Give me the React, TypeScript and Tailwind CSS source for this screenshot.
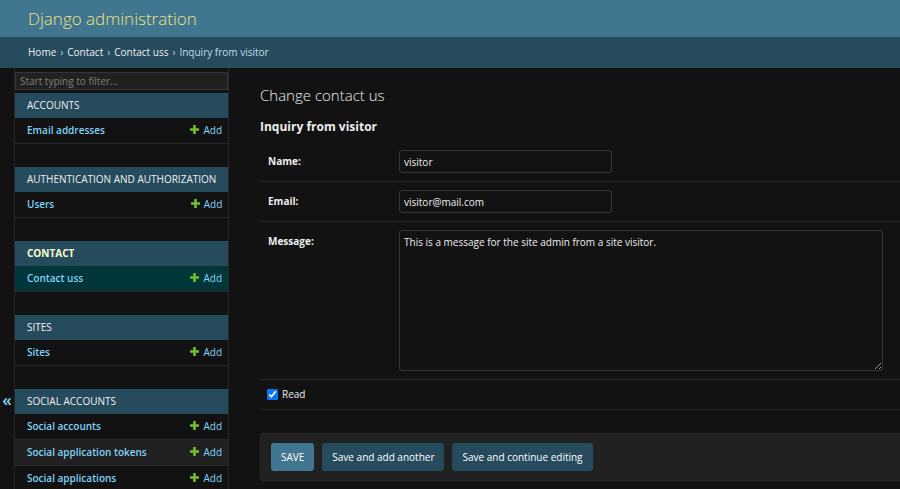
import { useState } from "react";

type Module = { caption: string; current?: boolean; models: string[] };

const modules: Module[] = [
  { caption: "Accounts", models: ["Email addresses"] },
  { caption: "Authentication and Authorization", models: ["Users"] },
  { caption: "Contact", current: true, models: ["Contact uss"] },
  { caption: "Sites", models: ["Sites"] },
  {
    caption: "Social Accounts",
    models: ["Social accounts", "Social application tokens", "Social applications"],
  },
];

function PlusIcon() {
  return (
    <svg width="9" height="9" viewBox="0 0 9 9" aria-hidden="true" className="mb-0.5 shrink-0">
      <path d="M3.2 0h2.6v3.2H9v2.6H5.8V9H3.2V5.8H0V3.2h3.2z" fill="#70bf2b" />
    </svg>
  );
}

function ModuleTable({ module }: { module: Module }) {
  return (
    <table className="w-full border-collapse">
      <caption
        className={`h-[25px] bg-[#264b5d] px-3 text-left leading-[25px] whitespace-nowrap uppercase ${
          module.current ? "font-bold text-[#ffffcc]" : "text-[#eeeeee]"
        }`}
      >
        <a href="#module">{module.caption}</a>
      </caption>
      <tbody>
        {module.models.map((model, i) => (
          <tr
            key={model}
            className={`h-[25px] border-b border-[#272727] leading-[25px] text-[#81d4fa] ${
              module.current ? "bg-[#00363a]" : i % 2 ? "bg-[#212121]" : ""
            }`}
          >
            <th scope="row" className="p-0 pl-3 text-left font-semibold">
              <a href="#model">{model}</a>
            </th>
            <td className="p-0 pr-1.5">
              <a href="#add" className="flex items-center justify-end gap-1">
                <PlusIcon />
                Add
              </a>
            </td>
          </tr>
        ))}
      </tbody>
    </table>
  );
}

function TextRow({ id, label, value }: { id: string; label: string; value: string }) {
  return (
    <div className="flex border-b border-[#272727] py-2">
      <label htmlFor={id} className="w-[139px] shrink-0 pl-2 leading-[23px] font-bold">
        {label}:
      </label>
      <input
        id={id}
        type="text"
        defaultValue={value}
        className="h-[23px] w-[213px] rounded-[3px] border border-[#353535] bg-[#121212] px-1 outline-none"
      />
    </div>
  );
}

const buttonClass = "h-7 rounded-[3px] px-2.5 text-white";

export default function App() {
  const [read, setRead] = useState(true);
  return (
    <div className="flex h-screen flex-col overflow-hidden bg-[#121212] font-['Open_Sans','Noto_Sans',sans-serif] text-[10px] text-[#eeeeee]">
      <header className="flex h-[37px] shrink-0 items-center bg-[#417690] px-7">
        <h1 className="text-[17px] font-light text-[#f0e17a]">
          <a href="#home">Django administration</a>
        </h1>
      </header>
      <nav
        aria-label="Breadcrumbs"
        className="flex h-[31px] shrink-0 items-center gap-1 bg-[#264b5d] px-7 text-[#c4dce8]"
      >
        <a href="#home" className="text-[#eeeeee]">Home</a>
        <span>›</span>
        <a href="#contact" className="text-[#eeeeee]">Contact</a>
        <span>›</span>
        <a href="#contact-uss" className="text-[#eeeeee]">Contact uss</a>
        <span>›</span>
        <span>Inquiry from visitor</span>
      </nav>
      <div className="flex min-h-0 grow">
        <button
          type="button"
          aria-label="Toggle navigation"
          className="flex w-[14px] shrink-0 items-start justify-center pt-80 text-[17px] leading-6 font-semibold text-[#81d4fa]"
        >
          «
        </button>
        <nav
          aria-label="Sidebar"
          className="w-[215px] shrink-0 overflow-hidden border-x border-[#272727] pt-1"
        >
          <input
            type="search"
            aria-label="Filter navigation items"
            placeholder="Start typing to filter..."
            className="mb-[3px] block h-[18px] w-full border border-[#353535] bg-[#212121] px-1 outline-none placeholder:text-[#7d7d7d]"
          />
          <div className="flex flex-col gap-[23px]">
            {modules.map((m) => (
              <ModuleTable key={m.caption} module={m} />
            ))}
          </div>
        </nav>
        <main className="min-w-0 grow pt-[15px] pl-[31px]">
          <h2 className="text-[15px] leading-6 font-light">Change contact us</h2>
          <h3 className="mt-2 mb-[3px] text-[12px] leading-6 font-bold">Inquiry from visitor</h3>
          <form onSubmit={(e) => e.preventDefault()}>
            <TextRow id="name" label="Name" value="visitor" />
            <TextRow id="email" label="Email" value="visitor@mail.com" />
            <div className="flex border-b border-[#272727] py-2">
              <label htmlFor="message" className="w-[139px] shrink-0 pl-2 leading-[23px] font-bold">
                Message:
              </label>
              <textarea
                id="message"
                defaultValue="This is a message for the site admin from a site visitor."
                className="mr-[17px] block h-[141px] grow rounded-[3px] border border-[#353535] bg-[#121212] px-1 py-[3px] leading-4 outline-none"
              />
            </div>
            <div className="flex h-[30px] items-center gap-1 border-b border-[#272727] pl-[7px]">
              <input
                id="read"
                type="checkbox"
                checked={read}
                onChange={(e) => setRead(e.target.checked)}
                className="size-[11px]"
              />
              <label htmlFor="read">Read</label>
            </div>
            <div className="mt-[23px] flex gap-2 rounded-l-[3px] border border-r-0 border-[#272727] bg-[#212121] px-2.5 py-[9px]">
              <button type="submit" className={`${buttonClass} bg-[#417690]`}>SAVE</button>
              <button type="submit" className={`${buttonClass} bg-[#264b5d]`}>Save and add another</button>
              <button type="submit" className={`${buttonClass} bg-[#264b5d]`}>Save and continue editing</button>
            </div>
          </form>
        </main>
      </div>
    </div>
  );
}
